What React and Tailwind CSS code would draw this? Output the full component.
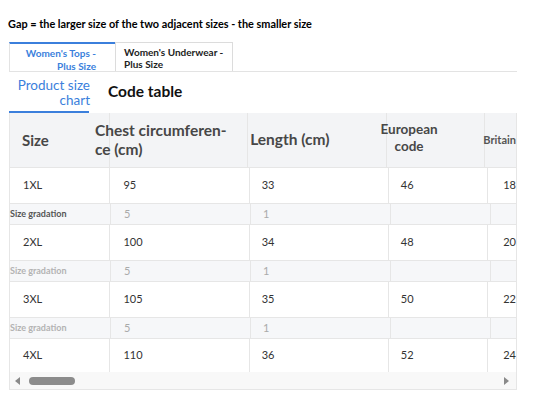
import React from 'react';

const rows = [
  { size: '1XL', chest: '95', len: '33', eu: '46', uk: '18' },
  { size: '2XL', chest: '100', len: '34', eu: '48', uk: '20' },
  { size: '3XL', chest: '105', len: '35', eu: '50', uk: '22' },
  { size: '4XL', chest: '110', len: '36', eu: '52', uk: '24' },
];

const cell = 'border-r border-[#e6e6e6] flex items-center';

const SizeRow = ({ r, last }) => (
  <div className={`flex bg-white text-[11px] text-[#333] ${last ? 'h-[33px]' : 'h-[36px] border-b border-[#e6e6e6]'}`}>
    <div className={`${cell} w-[101px] pl-[13px]`}>{r.size}</div>
    <div className={`${cell} w-[140px] pl-[13px]`}>{r.chest}</div>
    <div className={`${cell} w-[140px] pl-[12px]`}>{r.len}</div>
    <div className={`${cell} w-[100px] pl-[12px]`}>{r.eu}</div>
    <div className="flex-1 flex items-center pl-[15px]">{r.uk}</div>
  </div>
);

const GradRow = ({ first }) => (
  <div className="flex h-[21px] bg-[#f6f7f9] text-[11px] text-[#aaa] border-b border-[#e6e6e6]">
    <div className={`${cell} w-[101px] text-[9px] font-bold whitespace-nowrap ${first ? 'text-[#555]' : 'text-[#b3b3b3]'}`}>Size gradation</div>
    <div className={`${cell} w-[140px] pl-[13px]`}>5</div>
    <div className={`${cell} w-[140px] pl-[12px]`}>1</div>
    <div className={`${cell} w-[100px]`}></div>
    <div className="flex-1"></div>
  </div>
);

export default function App() {
  return (
    <div className="w-[536px] h-[403px] bg-white overflow-hidden" style={{ fontFamily: 'Lato, "Liberation Sans", sans-serif' }}>
      <div className="pt-[17px] pl-[8px] text-[10.9px] font-bold text-black leading-[14px]">
        Gap = the larger size of the two adjacent sizes - the smaller size
      </div>

      <div className="ml-[9px] mt-[11px] w-[508px] flex border-b border-[#e3e3e3] h-[30px]">
        <div className="w-[106px] border-t-2 border-[#3b7fdc] border-l border-l-[#e3e3e3] bg-white text-[10px] font-bold text-[#3b7fdc] leading-[13px] pt-[3px] text-right pr-[19px] whitespace-nowrap">
          <div>Women's Tops -</div>
          <div>Plus Size</div>
        </div>
        <div className="w-[118px] border border-b-0 border-[#dcdcdc] text-[10px] font-bold text-[#222] leading-[12px] pt-[3px] pl-[8px] whitespace-nowrap">
          <div>Women's Underwear -</div>
          <div>Plus Size</div>
        </div>
      </div>

      <div className="ml-[9px] flex items-end h-[41px]">
        <div className="w-[80px] border-b-2 border-[#3b7fdc] text-right text-[13.5px] leading-[15px] text-[#3b7fdc] pb-[3px] whitespace-nowrap">
          <div className="mr-[-1px]">Product size</div>
          <div className="mr-[-1px]">chart</div>
        </div>
        <div className="ml-[19px] text-[15.5px] font-bold text-[#111] pb-[10px]">Code table</div>
      </div>

      <div className="ml-[9px] w-[508px] border-l border-r border-b border-[#e6e6e6]">
        <div className="flex h-[55px] bg-[#f3f4f6] text-[#474747] font-bold border-b border-[#e6e6e6]">
          <div className={`${cell} w-[101px] pl-[12px] text-[15px]`}>Size</div>
          <div className={`${cell} w-[140px] text-[15.5px] leading-[19px] whitespace-nowrap`}>
            <div className="ml-[-15px]">
              <div>Chest circumferen-</div>
              <div>ce (cm)</div>
            </div>
          </div>
          <div className={`${cell} w-[140px] pl-[2px] text-[15.5px] whitespace-nowrap`}>Length (cm)</div>
          <div className={`${cell} w-[100px] text-[13.5px] leading-[17px] whitespace-nowrap`}>
            <div className="ml-[-6px] text-center mb-[5px]">
              <div>European</div>
              <div>code</div>
            </div>
          </div>
          <div className="flex-1 flex items-center text-[11px] text-[#555] whitespace-nowrap">
            <div className="ml-[-2px]">Britain</div>
          </div>
        </div>
        <SizeRow r={rows[0]} />
        <GradRow first />
        <SizeRow r={rows[1]} />
        <GradRow />
        <SizeRow r={rows[2]} />
        <GradRow />
        <SizeRow r={rows[3]} last />
        <div className="h-[17px] bg-[#f8f8f8] flex items-center px-[5px]">
          <div className="w-0 h-0 border-y-[4px] border-y-transparent border-r-[5px] border-r-[#8a8a8a]"></div>
          <div className="ml-[9px] w-[46px] h-[8px] rounded-full bg-[#8c8c8c]"></div>
          <div className="flex-1"></div>
          <div className="w-0 h-0 border-y-[4px] border-y-transparent border-l-[5px] border-l-[#8a8a8a] mr-[2px]"></div>
        </div>
      </div>
    </div>
  );
}
